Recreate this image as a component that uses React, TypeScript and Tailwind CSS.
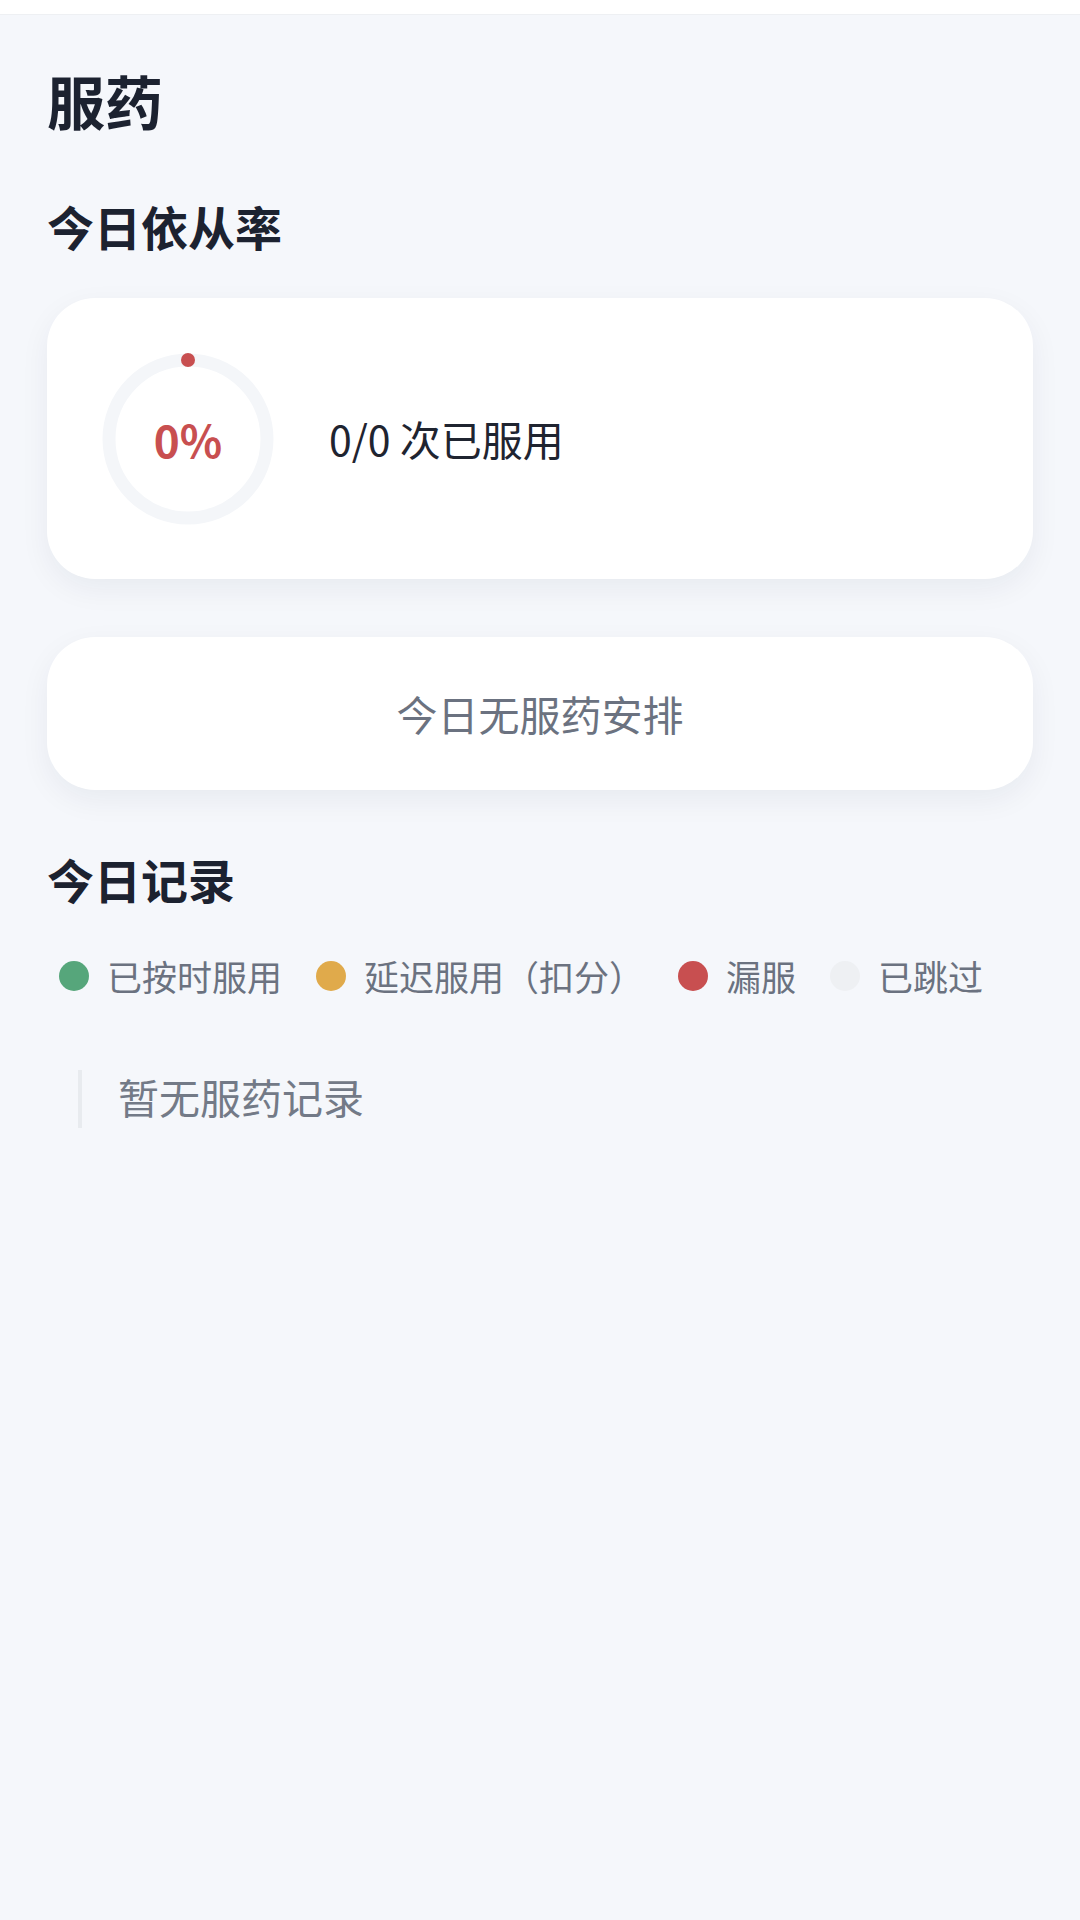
import React from "react"

const legend = [
  { label: "已按时服用", color: "bg-[#56a67b]" },
  { label: "延迟服用（扣分）", color: "bg-[#e0aa4b]" },
  { label: "漏服", color: "bg-[#c84f50]" },
  { label: "已跳过", color: "bg-[#eef0f3]" },
]

function Ring({ percent }: { percent: number }) {
  const r = 79
  const c = 2 * Math.PI * r
  return (
    <div className="relative w-[172px] h-[172px] shrink-0">
      <svg width="172" height="172" viewBox="0 0 172 172" className="-rotate-90">
        <circle cx="86" cy="86" r={r} fill="none" stroke="#f4f6f9" strokeWidth="13" />
        <circle
          cx="86"
          cy="86"
          r={r}
          fill="none"
          stroke="#c84f50"
          strokeWidth="14"
          strokeLinecap="round"
          strokeDasharray={`${(percent / 100) * c + 0.01} ${c}`}
        />
      </svg>
      <div className="absolute inset-0 flex items-center justify-center text-[44px] font-bold leading-none text-[#c84f50]">
        {percent}%
      </div>
    </div>
  )
}

export default function App() {
  return (
    <div
      className="min-h-[1920px] bg-[#f5f7fb] text-[#1c2230]"
      style={{ fontFamily: '"Noto Sans CJK SC", "Noto Sans", sans-serif' }}
    >
      <div className="h-[15px] bg-white border-b border-[#eef0f3]" />

      <div className="px-[47px]">
        <h1 className="mt-[56px] text-[58px] font-bold leading-none">服药</h1>

        <h2 className="mt-[73px] text-[47px] font-bold leading-none">今日依从率</h2>

        <div className="mt-[49px] h-[281px] rounded-[48px] bg-white shadow-[0_10px_30px_rgba(20,30,60,0.06)] flex items-center pl-[55px] gap-[55px]">
          <Ring percent={0} />
          <p className="text-[41px] leading-none text-[#1f2430]">0/0 次已服用</p>
        </div>

        <div className="mt-[58px] h-[153px] rounded-[48px] bg-white shadow-[0_10px_30px_rgba(20,30,60,0.06)] flex items-center justify-center">
          <p className="text-[41px] leading-none text-[#6b7280]">今日无服药安排</p>
        </div>

        <h2 className="mt-[65px] text-[47px] font-bold leading-none">今日记录</h2>

        <div className="mt-[54px] flex items-center gap-[34px] pl-[12px]">
          {legend.map((item) => (
            <div key={item.label} className="flex items-center gap-[18px]">
              <span className={`w-[30px] h-[30px] rounded-full ${item.color}`} />
              <span className="text-[35px] leading-[40px] text-[#6b7280]">{item.label}</span>
            </div>
          ))}
        </div>

        <div className="mt-[74px] ml-[31px] h-[58px] border-l-4 border-[#e8ebef] pl-[36px] pb-[6px] flex items-center">
          <p className="text-[41px] leading-none text-[#737a87]">暂无服药记录</p>
        </div>
      </div>
    </div>
  )
}
